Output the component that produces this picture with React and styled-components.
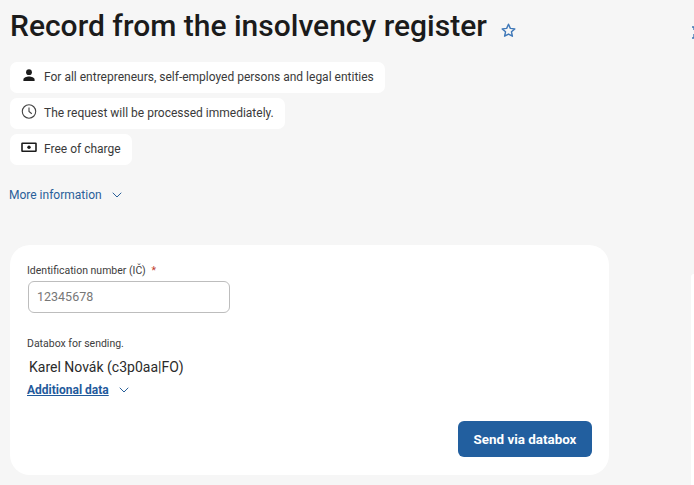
import React from "react";
import styled, { createGlobalStyle } from "styled-components";
import { ChevronDown } from "lucide-react";

const GlobalStyle = createGlobalStyle`
  html, body {
    margin: 0;
    padding: 0;
    width: 694px;
    height: 485px;
    overflow: hidden;
    background: #f6f6f6;
    font-family: Roboto, "Liberation Sans", sans-serif;
  }
`;

export default function App() {
  return (
    <>
      <GlobalStyle />
      <Page>
        <Main>
          <TitleRow>
            <h1>Record from the insolvency register</h1>
            <StarIcon />
          </TitleRow>
          <Tags>
            <Tag>
              <PersonIcon />
              For all entrepreneurs, self-employed persons and legal entities
            </Tag>
            <Tag>
              <ClockIcon />
              The request will be processed immediately.
            </Tag>
            <Tag>
              <MoneyIcon />
              Free of charge
            </Tag>
          </Tags>
          <MoreLink>
            More information
            <ChevronDown size={16} strokeWidth={1.5} />
          </MoreLink>
          <Card>
            <Label>
              Identification number (IČ) <em>*</em>
            </Label>
            <Input placeholder="12345678" readOnly />
            <BoxLabel>Databox for sending.</BoxLabel>
            <BoxValue>Karel Novák (c3p0aa|FO)</BoxValue>
            <AdditionalRow>
              <a href="#additional">Additional data</a>
              <ChevronDown size={16} strokeWidth={1.5} />
            </AdditionalRow>
            <Actions>
              <SendButton type="button">Send via databox</SendButton>
            </Actions>
          </Card>
        </Main>
        <Side>
          <SideIcon />
          <SidePanel />
        </Side>
      </Page>
    </>
  );
}

function StarIcon() {
  return (
    <Star viewBox="0 0 24 24" fill="none" stroke="#3f78b8" strokeWidth="2" strokeLinejoin="round">
      <path d="M12 3.2l2.6 5.8 6.3.7-4.7 4.2 1.3 6.2L12 17l-5.5 3.1 1.3-6.2-4.7-4.2 6.3-.7z" />
    </Star>
  );
}

function PersonIcon() {
  return (
    <TagIcon viewBox="0 0 16 16" fill="#1c1c1c">
      <circle cx="8" cy="4.2" r="2.9" />
      <path d="M2.4 13v-1.3C2.4 9.6 5.6 8.6 8 8.6s5.6 1 5.6 3.1V13z" />
    </TagIcon>
  );
}

function ClockIcon() {
  return (
    <TagIcon viewBox="0 0 16 16" fill="none" stroke="#444" strokeWidth="1.1">
      <circle cx="8" cy="7.5" r="6.7" />
      <path d="M8 3.4v4.1l2.8 2.2" />
    </TagIcon>
  );
}

function MoneyIcon() {
  return (
    <TagIcon viewBox="0 0 16 16" fill="none" stroke="#1c1c1c" strokeWidth="1.6">
      <rect x="1" y="3.2" width="14" height="8" rx="0.4" />
      <circle cx="8" cy="7.2" r="1.7" fill="#1c1c1c" stroke="none" />
    </TagIcon>
  );
}

function SideIcon() {
  return (
    <Clipped viewBox="0 0 14 14" fill="none" stroke="#3f76b5" strokeWidth="1.4">
      <path d="M1 1h5M1 12h5M3 1v3M3 8v4" />
    </Clipped>
  );
}

const Page = styled.div`
  display: flex;
  width: 694px;
  height: 485px;
  overflow: hidden;
  color: #1f1f1f;
`;

const Main = styled.main`
  width: 609px;
  flex-shrink: 0;
  padding-left: 10px;
  box-sizing: border-box;
`;

const TitleRow = styled.div`
  display: flex;
  align-items: center;
  height: 50px;
  h1 {
    margin: 0;
    font-size: 30px;
    font-weight: 500;
    color: #1b1b1b;
    white-space: nowrap;
  }
`;

const Star = styled.svg`
  width: 17px;
  height: 17px;
  margin: 11px 0 0 13px;
`;

const Tags = styled.div`
  display: flex;
  flex-direction: column;
  align-items: flex-start;
  gap: 5px;
  margin-top: 12px;
`;

const Tag = styled.div`
  display: flex;
  align-items: center;
  gap: 6px;
  height: 31px;
  padding: 0 11px 1px 11px;
  box-sizing: border-box;
  background: #fff;
  border-radius: 7px;
  font-size: 12px;
  color: #3a3a3a;
  white-space: nowrap;
`;

const TagIcon = styled.svg`
  width: 16px;
  height: 16px;
  flex-shrink: 0;
  margin-top: -3px;
  margin-right: 1px;
`;

const MoreLink = styled.div`
  display: flex;
  align-items: center;
  gap: 7px;
  margin: 20px 0 0 -1px;
  height: 20px;
  font-size: 12px;
  color: #2a6099;
`;

const Card = styled.section`
  margin-top: 40px;
  height: 230px;
  padding: 19px 18px 0 17px;
  box-sizing: border-box;
  background: #fff;
  border-radius: 20px;
`;

const Label = styled.div`
  font-size: 10.5px;
  line-height: 14px;
  color: #3d3d3d;
  em {
    font-style: normal;
    color: #c0392b;
    margin-left: 3px;
  }
`;

const Input = styled.input`
  display: block;
  width: 202px;
  height: 32px;
  margin: 3px 0 0 1px;
  padding: 0 8px 1px;
  box-sizing: border-box;
  border: 1px solid #bdbdbd;
  border-radius: 6px;
  background: #fff;
  font-family: inherit;
  font-size: 12.5px;
  outline: none;
  &::placeholder {
    color: #777;
  }
`;

const BoxLabel = styled.div`
  margin-top: 24px;
  font-size: 10.5px;
  line-height: 14px;
  color: #3d3d3d;
`;

const BoxValue = styled.div`
  margin: 7px 0 0 2px;
  font-size: 14px;
  line-height: 18px;
  color: #2b2b2b;
`;

const AdditionalRow = styled.div`
  display: flex;
  align-items: center;
  gap: 7px;
  margin-top: 6px;
  height: 16px;
  color: #2a6099;
  a {
    font-size: 12px;
    font-weight: 700;
    color: #1f5a9c;
  }
`;

const Actions = styled.div`
  display: flex;
  justify-content: flex-end;
  margin-top: 23px;
`;

const SendButton = styled.button`
  width: 134px;
  height: 36px;
  margin-right: -1px;
  border: 0;
  border-radius: 6px;
  background: #225f9f;
  color: #fff;
  font-family: inherit;
  font-size: 13.4px;
  font-weight: 700;
`;

const Side = styled.aside`
  flex: 1;
  display: flex;
  flex-direction: column;
  align-items: flex-end;
`;

const Clipped = styled.svg`
  width: 14px;
  height: 14px;
  margin: 26px -11px 0 0;
`;

const SidePanel = styled.div`
  width: 3px;
  height: 211px;
  margin-top: 234px;
  background: #fff;
  border-radius: 3px 0 0 0;
`;
